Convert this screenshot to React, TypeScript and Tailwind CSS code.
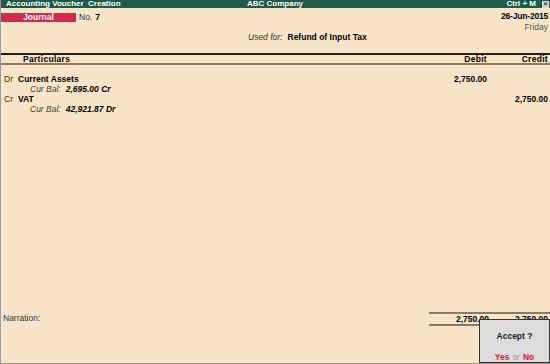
const Row = ({
  side,
  name,
  bal,
  debit,
  credit,
}: {
  side: string;
  name: string;
  bal: string;
  debit?: string;
  credit?: string;
}) => (
  <div className="flex flex-col">
    <div className="flex h-[10px] items-center">
      <span className="w-[17px] pl-[3px] text-[#333]">{side}</span>
      <span className="flex-1 font-bold">{name}</span>
      <span className="w-[70px] pr-[1px] text-right font-bold">{debit}</span>
      <span className="w-[62px] pr-[2px] text-right font-bold">{credit}</span>
    </div>
    <div className="flex h-[10px] items-center pl-[29px] italic">
      <span className="text-[#444]">Cur Bal:</span>
      <span className="ml-[5px] font-bold">{bal}</span>
    </div>
  </div>
);

export default function App() {
  return (
    <div
      className="flex h-[364px] w-[550px] flex-col overflow-hidden border-b border-l border-[#9a9a9a] bg-[#f8e5c8] text-[8.5px] leading-none text-black"
      style={{ fontFamily: '"Liberation Sans", Arial, sans-serif' }}
    >
      {/* Title bar */}
      <div className="flex h-[8px] items-center bg-[#1d5a48] pl-[5px] text-[8px] font-bold text-white">
        <span className="w-[241px]">Accounting Voucher&nbsp; Creation</span>
        <span className="flex-1">ABC Company</span>
        <span className="mr-[6px]">Ctrl + M</span>
        <span className="mr-[1px] flex h-[7px] w-[7px] items-center justify-center bg-[#d8d8d8] text-[6px] text-[#333]">
          ✕
        </span>
      </div>

      {/* Voucher header */}
      <div className="flex h-[45px] pt-[5px]">
        <div className="flex flex-1 flex-col">
          <div className="flex items-center">
            <div className="flex h-[9px] w-[75px] items-center justify-center bg-[#d8264f] font-bold text-white">
              Journal
            </div>
            <span className="ml-[3px] text-[#333]">No.</span>
            <span className="ml-[3px] font-bold">7</span>
          </div>
          <div className="mt-[11px] pl-[247px]">
            <span className="italic text-[#333]">Used for:</span>
            <span className="ml-[5px] font-bold">Refund of Input Tax</span>
          </div>
        </div>
        <div className="-mt-[1px] flex flex-col items-end pr-[2px]">
          <span className="font-bold tracking-[-0.2px]">26-Jun-2015</span>
          <span className="mt-[2px] text-[#555]">Friday</span>
        </div>
      </div>

      {/* Column header */}
      <div className="flex h-[12px] items-center border-y-2 border-[#222] border-b-[#8a7a64] font-bold tracking-[0.3px]">
        <span className="flex-1 pl-[22px]">Particulars</span>
        <span className="w-[70px] pr-[1px] text-right">Debit</span>
        <span className="w-[62px] pr-[2px] text-right">Credit</span>
      </div>

      {/* Entries */}
      <div className="flex flex-1 flex-col pt-[9px]">
        <Row side="Dr" name="Current Assets" bal="2,695.00 Cr" debit="2,750.00" />
        <Row side="Cr" name="VAT" bal="42,921.87 Dr" credit="2,750.00" />
      </div>

      {/* Narration & totals */}
      <div className="flex h-[51px] flex-col">
        <div className="flex items-start">
          <span className="flex-1 pl-[2px] pt-[2px] text-[#333]">Narration:</span>
          <div className="flex w-[121px] flex-col">
            <div className="h-[2px] bg-[#8a7a64]" />
            <div className="flex h-[10px] items-center font-bold">
              <span className="w-[60px] text-right">2,750.00</span>
              <span className="flex-1 pr-[2px] text-right">2,750.00</span>
            </div>
            <div className="h-[2px] bg-[#8a7a64]" />
          </div>
        </div>
      </div>

      {/* Accept dialog */}
      <div className="absolute left-[479px] top-[319px] flex h-[44px] w-[71px] flex-col items-center border border-[#333] bg-[#dcdcdc]">
        <span className="mt-[12px] font-bold text-[#222]">Accept ?</span>
        <div className="mt-auto mb-[1px] font-bold">
          <span className="text-[#f0101a]">Yes</span>
          <span className="mx-[3px] font-normal text-[#999]">or</span>
          <span className="text-[#f0101a]">No</span>
        </div>
      </div>
    </div>
  );
}
